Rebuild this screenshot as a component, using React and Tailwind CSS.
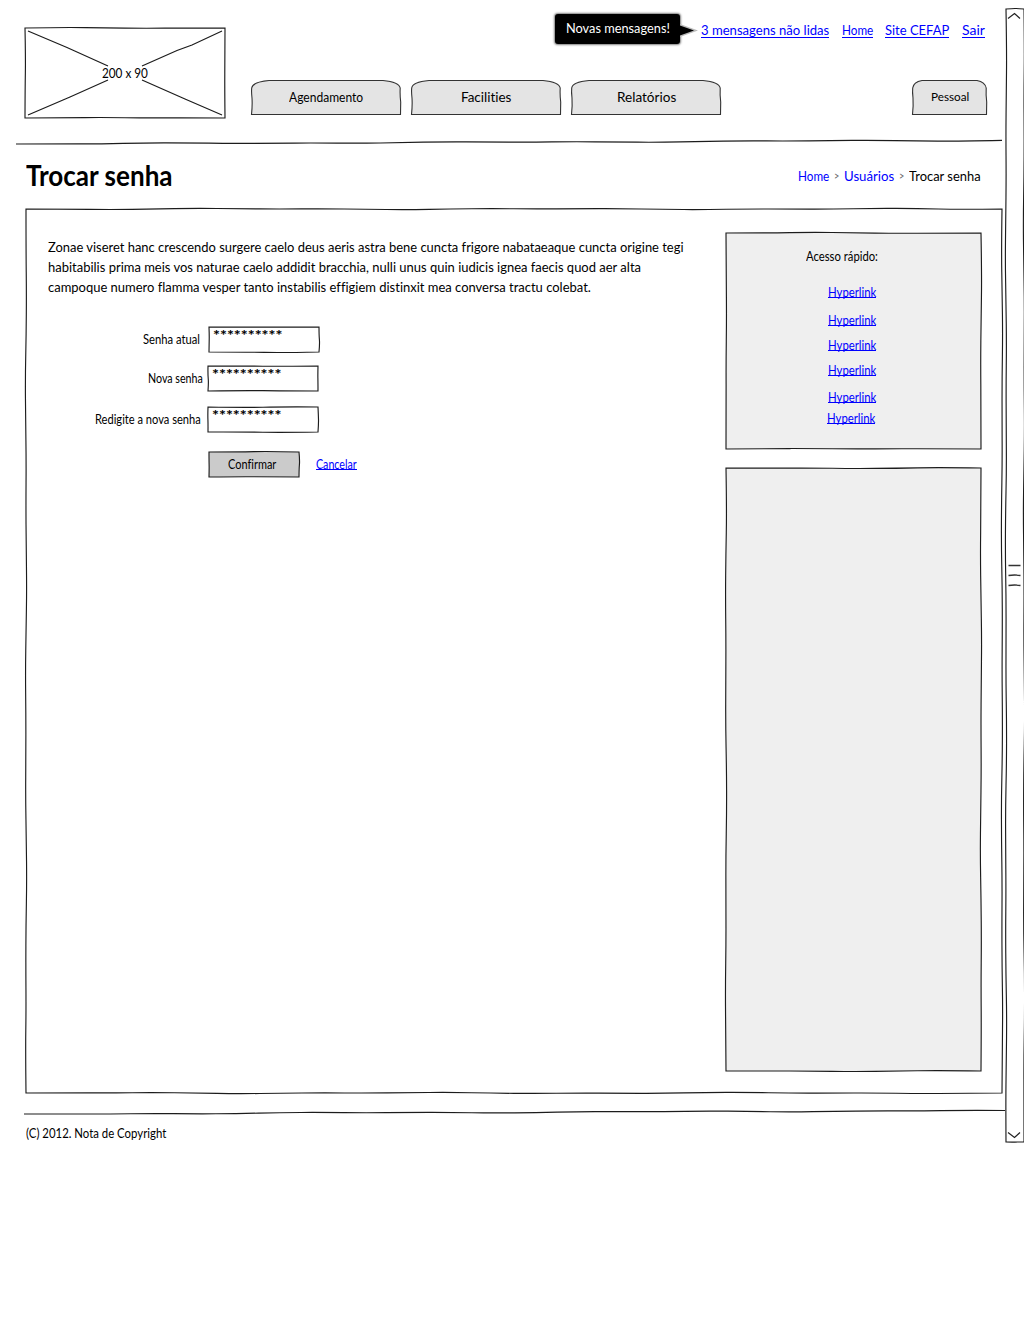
import { useLayoutEffect, useRef, useState } from "react";

// Horizontally condenses a line of text to a fixed width.
function Line({ w, className = "", link = false, children }) {
  const ref = useRef(null);
  const [scale, setScale] = useState(1);
  useLayoutEffect(() => {
    setScale(w / ref.current.offsetWidth);
  }, [w]);
  return (
    <span
      className={"block shrink-0 whitespace-nowrap " + (link ? "text-[#0000ff] " : "") + className}
      style={{ width: w }}
    >
      <span className="block h-full w-max origin-left" style={{ transform: `scaleX(${scale})` }}>
        <span ref={ref} className="inline-block">{children}</span>
      </span>
    </span>
  );
}

function Link({ w, className = "", children }) {
  return (
    <a className={"block shrink-0 border-b border-[#0000ff] " + className} style={{ width: w }}>
      <Line w={w} link>{children}</Line>
    </a>
  );
}

// Points of one hand-drawn stroke between two corners.
function stroke(x1, y1, x2, y2, seed) {
  const len = Math.hypot(x2 - x1, y2 - y1);
  const n = Math.max(3, Math.round(len / 42));
  const nx = -(y2 - y1) / len;
  const ny = (x2 - x1) / len;
  const pts = [];
  for (let i = 1; i < n; i++) {
    const t = i / n;
    const o = (Math.sin(i * 1.9 + seed * 2.3) + Math.sin(i * 0.83 + seed)) * 0.4;
    pts.push([x1 + (x2 - x1) * t + nx * o, y1 + (y2 - y1) * t + ny * o]);
  }
  let d = "";
  pts.forEach((p, i) => {
    const q = pts[i + 1];
    const e = q ? [(p[0] + q[0]) / 2, (p[1] + q[1]) / 2] : [x2, y2];
    d += ` Q${p[0].toFixed(2)} ${p[1].toFixed(2)} ${e[0].toFixed(2)} ${e[1].toFixed(2)}`;
  });
  return d;
}

function Box({ w, h, seed = 1, fill = "none", className = "", children }) {
  const d =
    "M0 0" + stroke(0, 0, w, 0, seed) + stroke(w, 0, w, h, seed + 1) +
    stroke(w, h, 0, h, seed + 2) + stroke(0, h, 0, 0, seed + 3) + "Z";
  return (
    <div className={"relative shrink-0 " + className} style={{ width: w, height: h }}>
      <svg className="absolute inset-0 overflow-visible" width={w} height={h} aria-hidden="true">
        <path d={d} fill={fill} stroke="#1c1c1c" strokeWidth="1.15" />
      </svg>
      <div className="relative h-full">{children}</div>
    </div>
  );
}

function Rule({ w, y1, y2, seed, className = "" }) {
  return (
    <svg className={"block shrink-0 overflow-visible " + className} width={w} height="4" aria-hidden="true">
      <path d={`M0 ${y1}` + stroke(0, y1, w, y2, seed)} fill="none" stroke="#1c1c1c" strokeWidth="1.2" />
    </svg>
  );
}

function Tab({ w, rx = 18, ry = 8, children, className = "" }) {
  return (
    <div className={"relative flex h-[35px] shrink-0 justify-center " + className} style={{ width: w }}>
      <svg className="absolute inset-0 overflow-visible" width={w} height="35" aria-hidden="true">
        <path
          d={`M0.5 34.5 Q1.5 25 1 18 Q0.3 12 0.7 ${ry} Q1.5 2 ${rx} 0.5 L${w - rx} 0.5 Q${w - 2} 2 ${w - 0.8} ${ry} Q${w - 1.2} 15 ${w - 0.3} 22 L${w - 0.5} 34.5 Z`}
          fill="#e4e4e4" stroke="#333" strokeWidth="1.1"
        />
      </svg>
      <div className="relative">{children}</div>
    </div>
  );
}

function Field({ label, labelWidth, gap, seed, className = "" }) {
  return (
    <div className={"flex h-[25px] items-start " + className}>
      <div className="flex justify-end" style={{ width: 160 - gap }}>
        <Line w={labelWidth} className="mt-[4px] text-[13px] leading-4">{label}</Line>
      </div>
      <Box w={110} h={25} seed={seed} fill="#fff" className="ml-auto">
        <Line w={70} className="pl-[4px] text-[14px] font-black leading-4">**********</Line>
      </Box>
    </div>
  );
}

const shortcuts = [
  "mt-[20px]", "mt-[14px]", "mt-[11px]", "mt-[11px]", "mt-[13px]", "mt-[7px] -ml-px",
];

export default function App() {
  return (
    <div className="flex h-[1318px] w-[1024px] overflow-hidden bg-white font-['Lato','Noto_Sans',sans-serif] text-[14px] leading-4 text-black [font-variant-ligatures:none]">
      <div className="flex w-[1005px] shrink-0 flex-col">
        <header className="flex h-[140px] shrink-0 pl-[25px]">
          <Box w={200} h={90} seed={4} className="mt-[28px]">
            <svg className="absolute inset-0" width="200" height="90" aria-hidden="true">
              <path
                d="M3 3 L42 19.5 L83 38 M117 38 L152 22.5 L167 17 L197 3 M3 87 L45 69 L83 52 M117 52 L160 71 L197 87"
                fill="none" stroke="#1c1c1c" strokeWidth="1.2"
              />
            </svg>
            <Line w={46} className="pl-[77px] pt-[37px] text-[13px] leading-4">200 x 90</Line>
          </Box>
          <div className="w-[780px]">
            <nav className="flex h-[80px] items-start pl-[330px]">
              <div className="mt-[14px] flex h-[30px] w-[125px] shrink-0 justify-center rounded-[3px] bg-black text-white shadow-[0_0_2px_1px_rgba(0,0,0,0.5)]">
                <Line w={104} className="mt-[6px]">Novas mensagens!</Line>
              </div>
              <svg className="mt-[22px] block h-4 w-[21px] shrink-0" viewBox="0 0 21 16" aria-hidden="true">
                <path d="M0 2 L18 8.5 L0 15Z" fill="#bbb" />
                <path d="M0 3.5 L14 8.5 L0 13.5Z" fill="#000" />
              </svg>
              <div className="mt-[22px] flex">
                <Link w={128} className="h-4">3 mensagens não lidas</Link>
                <Link w={31} className="ml-[13px] h-4">Home</Link>
                <Link w={64} className="ml-[12px] h-4">Site CEFAP</Link>
                <Link w={23} className="ml-[13px] h-4">Sair</Link>
              </div>
            </nav>
            <div className="flex gap-[10px] pl-[26px]">
              <Tab w={150}><Line w={74} className="mt-[9px]">Agendamento</Line></Tab>
              <Tab w={150}><Line w={50} className="mt-[9px]">Facilities</Line></Tab>
              <Tab w={150}><Line w={59} className="mt-[9px]">Relatórios</Line></Tab>
              <Tab w={75} rx={10} className="ml-[181px]">
                <Line w={38} className="mt-[9px] text-[12px]">Pessoal</Line>
              </Tab>
            </div>
          </div>
        </header>
        <Rule w={986} y1={4} y2={0.3} seed={2} className="ml-4" />
        <div className="flex h-[65px] shrink-0 justify-between pl-[26px] pr-[24px]">
          <h1><Line w={147} className="mt-[13px] text-[28px] font-bold leading-9">Trocar senha</Line></h1>
          <div className="mt-[24px] flex gap-[5px]">
            <Line w={31} link>Home</Line>
            <Line w={5} className="text-[11px] text-[#666]">&gt;</Line>
            <Line w={50} link>Usuários</Line>
            <Line w={5} className="text-[11px] text-[#666]">&gt;</Line>
            <Line w={72}>Trocar senha</Line>
          </div>
        </div>
        <Box w={976} h={884} seed={7} className="ml-[26px]">
          <div className="flex">
            <main className="w-[700px] pl-[22px] pt-[28px]">
              <Line w={636} className="leading-5">Zonae viseret hanc crescendo surgere caelo deus aeris astra bene cuncta frigore nabataeaque cuncta origine tegi</Line>
              <Line w={593} className="leading-5">habitabilis prima meis vos naturae caelo addidit bracchia, nulli unus quin iudicis ignea faecis quod aer alta</Line>
              <Line w={543} className="leading-5">campoque numero flamma vesper tanto instabilis effigiem distinxit mea conversa tractu colebat.</Line>
              <form>
                <Field label="Senha atual" labelWidth={57} gap={8} seed={2} className="mt-[30px] w-[271px]" />
                <Field label="Nova senha" labelWidth={55} gap={5} seed={5} className="mt-[14px] w-[270px]" />
                <Field label="Redigite a nova senha" labelWidth={106} gap={7} seed={8} className="mt-[16px] w-[270px]" />
                <div className="mt-[20px] flex pl-[161px]">
                  <Box w={90} h={25} seed={3} fill="#cbcbcb">
                    <Line w={48} className="pl-[19px] pt-[4px] text-[13px]">Confirmar</Line>
                  </Box>
                  <Link w={41} className="ml-[17px] mt-[4px] h-[14px] text-[13px]">Cancelar</Link>
                </div>
              </form>
            </main>
            <aside className="flex flex-col gap-[19px] pt-[24px]">
              <Box w={255} h={216} seed={3} fill="#efefef">
                <div className="pl-[80px] pt-[15px] text-[13px]">
                  <Line w={72}>Acesso rápido:</Line>
                  <div className="pl-[22px]">
                    {shortcuts.map((m, i) => <Link key={i} w={48} className={"h-[14px] " + m}>Hyperlink</Link>)}
                  </div>
                </div>
              </Box>
              <Box w={255} h={603} seed={6} fill="#efefef" />
            </aside>
          </div>
        </Box>
        <Rule w={981} y1={4} y2={0.5} seed={5} className="ml-[24px] mt-[17px]" />
        <footer className="pl-[26px] pt-[11px]">
          <Line w={140} className="text-[13px]">(C) 2012. Nota de Copyright</Line>
        </footer>
      </div>
      <Box w={18} h={1133} seed={9} className="mt-[8.5px] ml-[0.5px]">
        <svg className="absolute inset-0" width="18" height="1133" aria-hidden="true">
          <path d="M2 9.5 L8.5 4.5 L14 9.5 M2 1123.5 L8.5 1128.5 L14 1123.5" fill="none" stroke="#222" strokeWidth="1.2" />
          <path d="M2.5 556.5 H14.5 M2.5 566.5 Q8.5 565.5 14.5 566.5 M2.5 576.5 Q8.5 575.5 14.5 576.5" fill="none" stroke="#333" strokeWidth="1.3" />
        </svg>
      </Box>
    </div>
  );
}
